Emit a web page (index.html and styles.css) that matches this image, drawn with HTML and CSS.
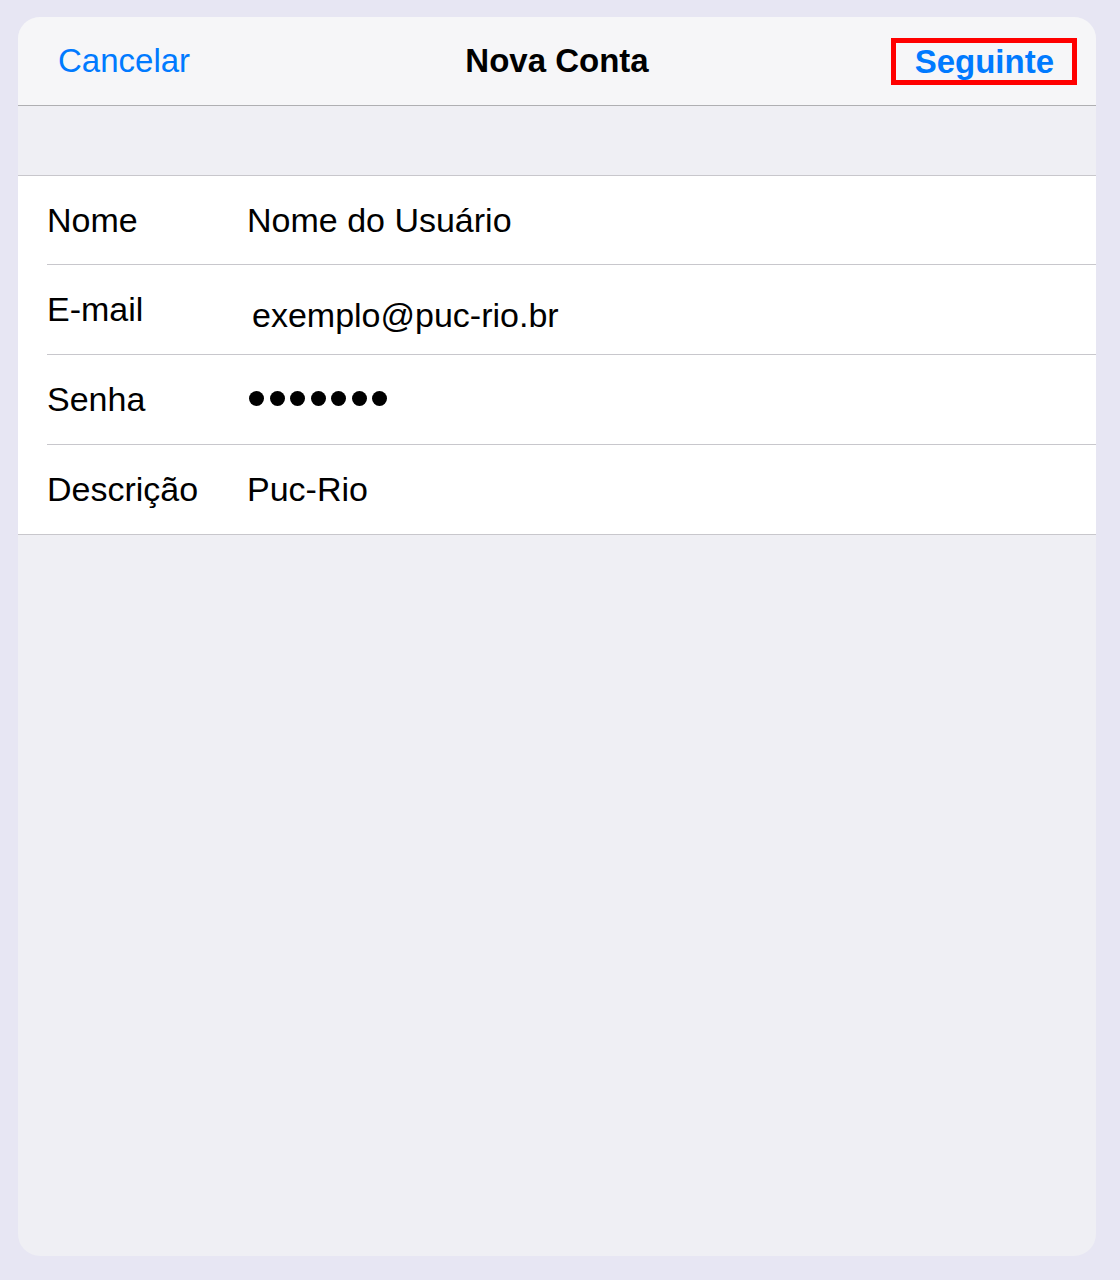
FILE: index.html
```html
<!DOCTYPE html>
<html lang="pt">
<head>
  <meta charset="UTF-8" />
  <title>Nova Conta</title>
  <link rel="stylesheet" href="styles.css">
</head>
<body>

  <div class="sheet">
    <!-- barra de navegação -->
    <div class="nav">
      <span class="nav-btn cancel">Cancelar</span>
      <span class="nav-title">Nova Conta</span>
      <span class="nav-btn next"><span class="mark">Seguinte</span></span>
    </div>

    <div class="gap"></div>

    <!-- formulário -->
    <div class="form">
      <div class="row">
        <span class="label">Nome</span>
        <span class="value">Nome do Usuário</span>
      </div>
      <div class="row">
        <span class="label">E-mail</span>
        <span class="value email">exemplo@puc-rio.br</span>
      </div>
      <div class="row">
        <span class="label">Senha</span>
        <span class="value dots">
          <i></i><i></i><i></i><i></i><i></i><i></i><i></i>
        </span>
      </div>
      <div class="row">
        <span class="label">Descrição</span>
        <span class="value">Puc-Rio</span>
      </div>
    </div>

    <div class="rest"></div>
  </div>

</body>
</html>
```

FILE: styles.css
```css
body {
  margin:0;
  padding:17px 24px 24px 18px;
  font-family: 'Liberation Sans', Arial, sans-serif;
  background:#e7e6f3;
  height:1280px;
  box-sizing:border-box;
  display:flex;
}
.sheet {
  flex:1;
  display:flex;
  flex-direction:column;
  background:#efeff4;
  border-radius:22px;
  overflow:hidden;
}
.nav {
  height:88px;
  background:#f6f6f8;
  border-bottom:1px solid #afafb2;
  display:flex;
  align-items:center;
  justify-content:space-between;
  padding:0 19px 0 40px;
  position:relative;
}
.nav-btn {
  color:#007aff;
  font-size:33px;
}
.nav-title {
  position:absolute;
  left:0; right:0;
  text-align:center;
  font-size:33px;
  font-weight:bold;
  color:#000;
  pointer-events:none;
}
.next { font-weight:bold; }
.next .mark {
  display:inline-block;
  border:5px solid #ff0000;
  line-height:37px;
  padding:0 18px 0 19px;
}
.gap {
  height:69px;
  border-bottom:1px solid #c8c7cc;
}
.form {
  background:#fff;
  border-bottom:1px solid #c8c7cc;
}
.row {
  height:89px;
  margin-left:29px;
  display:flex;
  align-items:center;
  font-size:34px;
  color:#000;
  border-bottom:1px solid #c8c7cc;
}
.row:first-child { height:88px; }
.row:last-child { border-bottom:none; }
.label { width:200px; }
.value.email {
  margin:12px 0 0 5px;
}
.dots {
  display:flex;
  gap:5.5px;
  margin:-3px 0 0 2px;
}
.dots i {
  width:15px;
  height:15px;
  border-radius:50%;
  background:#000;
}
.rest { flex:1; }
```
